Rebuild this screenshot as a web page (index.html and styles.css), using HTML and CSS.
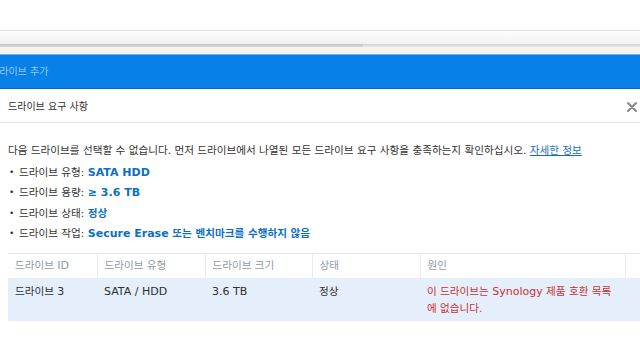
FILE: index.html
```html
<!DOCTYPE html>
<html lang="ko">
<head>
<meta charset="UTF-8">
<title>드라이브 추가</title>
<link rel="stylesheet" href="styles.css">
</head>
<body>
<div class="page">
	<div class="toolbar">
		<div class="toolbarFace"></div>
		<div class="toolbarEdge"><span class="dark"></span><span class="light"></span></div>
	</div>
	<div class="gap"></div>
	<header class="winBar">
		<h1 class="winTitle">드라이브 추가</h1>
	</header>
	<section class="dialog">
		<div class="dialogHead">
			<h2 class="dialogTitle">드라이브 요구 사항</h2>
			<a href="javascript:;" class="close">
				<svg width="10" height="10" viewBox="0 0 10 10"><path d="M1 1 L9 9 M9 1 L1 9" stroke="#858585" stroke-width="1.8" stroke-linecap="round"/></svg>
			</a>
		</div>
		<div class="dialogBody">
			<p class="intro">다음 드라이브를 선택할 수 없습니다. 먼저 드라이브에서 나열된 모든 드라이브 요구 사항을 충족하는지 확인하십시오. <a href="javascript:;">자세한 정보</a></p>
			<ul class="reqs">
				<li>드라이브 유형: <b class="en">SATA HDD</b></li>
				<li>드라이브 용량: <b class="en">≥ 3.6 TB</b></li>
				<li>드라이브 상태: <b>정상</b></li>
				<li>드라이브 작업: <b><span class="en">Secure Erase</span> 또는 벤치마크를 수행하지 않음</b></li>
			</ul>
			<table class="grid">
				<thead>
					<tr>
						<th>드라이브 <span class="en">ID</span></th>
						<th>드라이브 유형</th>
						<th>드라이브 크기</th>
						<th>상태</th>
						<th>원인</th>
						<th></th>
					</tr>
				</thead>
				<tbody>
					<tr>
						<td>드라이브 <span class="en">3</span></td>
						<td><span class="en">SATA / HDD</span></td>
						<td><span class="en">3.6 TB</span></td>
						<td>정상</td>
						<td class="reason">이 드라이브는 <span class="en">Synology</span> 제품 호환 목록 에 없습니다.</td>
						<td></td>
					</tr>
				</tbody>
			</table>
		</div>
	</section>
</div>
</body>
</html>
```

FILE: styles.css
```css
html, body {
	margin: 0;
	padding: 0;
	background: #fff;
}
h1, h2, p, ul {
	margin: 0;
	padding: 0;
}
ul {
	list-style: none;
}
body {
	font: 10.6px/1.4 "DejaVu Sans", "Noto Sans CJK KR", sans-serif;
	color: #333;
	width: 640px;
	height: 360px;
	overflow: hidden;
}
.en {
	font-size: 11px;
}
a {
	color: #1a6fb8;
}

/* 상단 툴바 */
.toolbar {
	margin-top: 30px;
	border-top: 1px solid #e4e4e4;
}
.toolbarFace {
	height: 13px;
	background: linear-gradient(#fdfdfd, #f1f1f1);
}
.toolbarEdge {
	display: flex;
	height: 3px;
}
.toolbarEdge .dark {
	width: 363px;
	background: linear-gradient(#c4c4c4, #dadada);
}
.toolbarEdge .light {
	flex: 1;
	background: linear-gradient(#d4d4d4, #e6e6e6);
}
.gap {
	height: 7px;
	background: #f6f2ec;
}

/* 파란 타이틀바 */
.winBar {
	height: 33px;
	border-top: 1px solid #63b2f2;
	border-bottom: 1px solid #0b66b8;
	background: #0780e8;
	display: flex;
	align-items: center;
}
.winTitle {
	margin-left: -10px;
	font-size: 10px;
	font-weight: normal;
	color: #93c8f4;
}

/* 대화 상자 */
.dialogHead {
	display: flex;
	align-items: center;
	justify-content: space-between;
	height: 31px;
	padding: 2px 3px 0 8px;
	border-bottom: 1px solid #e6e6e6;
}
.dialogTitle {
	font-size: 10px;
	font-weight: normal;
	color: #2f2f2f;
}
.close {
	display: flex;
	width: 10px;
	height: 10px;
}
.dialogBody {
	padding: 17px 0 0 8px;
}
.intro {
	line-height: 20px;
	white-space: nowrap;
}
.reqs {
	margin-top: 2px;
}
.reqs li {
	display: flex;
	align-items: center;
	height: 20.5px;
	white-space: pre;
}
.reqs li::before {
	content: "•";
	width: 10px;
	padding-left: 1px;
	font-size: 9px;
}
.reqs b {
	color: #0c6fc6;
}

/* 목록 */
.grid {
	margin-top: 9px;
	width: 632px;
	border-collapse: collapse;
	table-layout: fixed;
}
.grid th {
	box-sizing: border-box;
	height: 24px;
	padding: 0 7px;
	text-align: left;
	font-weight: normal;
	color: #8e9ba6;
	border-top: 1px solid #e7e7e7;
	border-right: 1px solid #ececec;
}
.grid th:nth-child(1) { width: 89px; }
.grid th:nth-child(2) { width: 108px; }
.grid th:nth-child(3) { width: 107px; }
.grid th:nth-child(4) { width: 108px; }
.grid th:nth-child(5) { width: 205px; }
.grid th:last-child {
	border-right: none;
}
.grid td {
	height: 34px;
	padding: 5px 7px 4px;
	vertical-align: top;
	line-height: 17px;
	background: #e4effb;
	color: #2f2f2f;
}
.grid .reason {
	color: #cf2f2f;
}
```
